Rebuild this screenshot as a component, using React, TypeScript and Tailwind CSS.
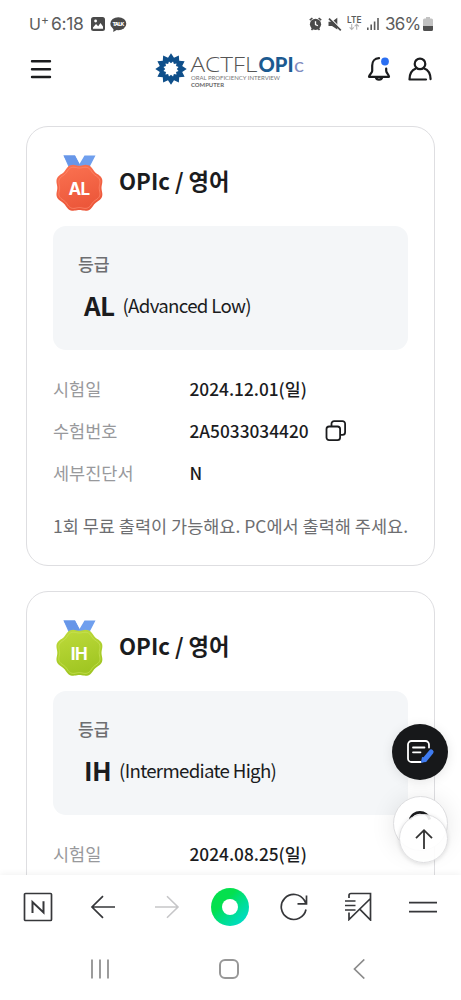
import React from 'react';

type Medal = {
  code: string;
  from: string;
  to: string;
  line: string;
};

type Result = {
  title: string;
  level: string;
  date: string;
  number: string;
  medal: Medal;
};

const results: Result[] = [
  {
    title: 'OPIc / 영어',
    level: '(Advanced Low)',
    date: '2024.12.01(일)',
    number: '2A5033034420',
    medal: { code: 'AL', from: '#fb7352', to: '#ec573a', line: '#ff8e72' },
  },
  {
    title: 'OPIc / 영어',
    level: '(Intermediate High)',
    date: '2024.08.25(일)',
    number: '2A5033034420',
    medal: { code: 'IH', from: '#bfdb3c', to: '#a0c622', line: '#cae25a' },
  },
];

// closed outline whose radius swings around `radius` eight times
function scallop(cx: number, cy: number, radius: number, depth: number) {
  const points: string[] = [];
  for (let i = 0; i < 120; i++) {
    const a = (i / 120) * Math.PI * 2;
    const r = radius - depth * Math.cos(8 * a);
    points.push(`${(cx + r * Math.cos(a)).toFixed(2)},${(cy + r * Math.sin(a)).toFixed(2)}`);
  }
  return points.join(' ');
}

function star(cx: number, cy: number, outer: number, inner: number, count: number, shift = 0) {
  const points: string[] = [];
  for (let i = 0; i < count * 2; i++) {
    const a = ((i + shift) / (count * 2)) * Math.PI * 2 - Math.PI / 2;
    const r = i % 2 === 0 ? outer : inner;
    points.push(`${(cx + r * Math.cos(a)).toFixed(2)},${(cy + r * Math.sin(a)).toFixed(2)}`);
  }
  return points.join(' ');
}

function StatusBar() {
  return (
    <div className="h-12 shrink-0 flex items-center justify-between pl-[29px] pr-[28px] text-[#5c5c5c] font-['Inter',sans-serif]">
      <div className="flex items-center">
        <span className="text-[16px] leading-5">U</span>
        <span className="text-[12px] leading-5 -mt-[9px] w-[10px]">+</span>
        <span className="text-[17.5px] leading-5 w-[40px] tracking-[-0.3px]">6:18</span>
        <svg className="mr-[5px]" width="14" height="14" viewBox="0 0 14 14">
          <rect width="14" height="14" rx="2.5" fill="#4a4a4a" />
          <path d="M2 10.5 5 7l2.2 2.3L9.5 6 12 9.5v2.3H2z" fill="#fff" />
          <circle cx="4.6" cy="4" r="1.4" fill="#fff" />
        </svg>
        <svg width="17" height="15" viewBox="0 0 17 15">
          <ellipse cx="8.3" cy="6.7" rx="8" ry="6.5" fill="#4a4a4a" />
          <path d="M3.6 10.5 3.2 15l4.3-2.5z" fill="#4a4a4a" />
          <text x="2.4" y="8.7" fontSize="5.2" fontWeight="800" fill="#fff" textLength="12">TALK</text>
        </svg>
      </div>
      <div className="flex items-center">
        <svg className="mr-[6px]" width="13" height="14" viewBox="0 0 13 14">
          <circle cx="6.5" cy="7.3" r="5.6" fill="#4a4a4a" />
          <path d="M.8 3.2 3.4 1M12.2 3.2 9.6 1M2.5 13l1.4-1.6M10.5 13l-1.4-1.6" stroke="#4a4a4a" strokeWidth="1.6" />
          <path d="M6.5 4.2v3.3l2.4 1.3" stroke="#fff" strokeWidth="1.3" fill="none" />
        </svg>
        <svg className="mr-[5px]" width="14" height="14" viewBox="0 0 14 14">
          <path d="M.5 4.8H4L9.3.8v11.8L4 9H.5z" fill="#4a4a4a" />
          <path d="M1.8.6 13.6 12.4" stroke="#fff" strokeWidth="1.2" />
          <path d="M1 1.6 12.8 13.4" stroke="#4a4a4a" strokeWidth="1.7" />
        </svg>
        <svg className="mr-[5px] -mt-[2px]" width="15" height="16" viewBox="0 0 15 16">
          <text x="0" y="7.5" fontSize="8.6" fontWeight="600" fill="#5c5c5c" textLength="14.5" lengthAdjust="spacingAndGlyphs">LTE</text>
          <path d="M4.7 9v5.5M2.6 12.4l2.1 2.1 2.1-2.1M9.7 14.8V9.3M7.6 11.4l2.1-2.1 2.1 2.1" stroke="#b5b5b5" strokeWidth="1.1" fill="none" />
        </svg>
        <svg className="mr-[7px]" width="12" height="12" viewBox="0 0 12 12" fill="#5c5c5c">
          <rect y="9.5" width="1.6" height="2.5" />
          <rect x="3.4" y="6.5" width="1.6" height="5.5" />
          <rect x="6.8" y="3.5" width="1.6" height="8.5" />
          <rect x="10.2" width="1.6" height="12" />
        </svg>
        <span className="text-[17px] leading-5 w-[36px] -ml-px mr-px tracking-[-0.8px] whitespace-nowrap">36%</span>
        <svg className="ml-[1px]" width="10" height="14" viewBox="0 0 10 14">
          <path d="M3 0h4v1.5h1.5A1.5 1.5 0 0 1 10 3v6H0V3a1.5 1.5 0 0 1 1.5-1.5H3z" fill="#c2c2c2" />
          <path d="M0 9h10v3.5A1.5 1.5 0 0 1 8.5 14h-7A1.5 1.5 0 0 1 0 12.5z" fill="#505050" />
        </svg>
      </div>
    </div>
  );
}

function Logo() {
  return (
    <svg width="150" height="38" viewBox="0 -1 150 38" fontFamily="Lato, sans-serif">
      <polygon points={star(16, 18, 15.7, 11.6, 12)} fill="#0f4f8a" />
      <polygon points={star(16, 18, 7.8, 5.8, 12, 1)} fill="#fff" />
      <text x="35.5" y="21" fontSize="20" fontWeight="300" fill="#555" textLength="67" lengthAdjust="spacingAndGlyphs" fontFamily="Open Sans, sans-serif">ACTFL</text>
      <text x="103.5" y="21" fontSize="20" fontWeight="900" fill="#1c5a90" textLength="35" lengthAdjust="spacingAndGlyphs">OPI</text>
      <text x="139" y="21" fontSize="20" fill="#7f8cc0" textLength="10" lengthAdjust="spacingAndGlyphs">c</text>
      <text x="36" y="28.8" fontSize="5.4" fill="#777" textLength="89" lengthAdjust="spacingAndGlyphs">ORAL PROFICIENCY INTERVIEW</text>
      <text x="36" y="35.6" fontSize="5.4" fontWeight="700" fill="#666" textLength="33" lengthAdjust="spacingAndGlyphs">COMPUTER</text>
    </svg>
  );
}

function Header() {
  return (
    <header className="h-[42px] shrink-0 flex items-center pl-[30px] pr-[29px]">
      <svg width="22" height="20" viewBox="0 0 22 20" stroke="#1b1c1e" strokeWidth="2.4" strokeLinecap="round">
        <path d="M2 2.3h18M2 10.2h18M2 18h18" />
      </svg>
      <div className="ml-[103px] -mt-px">
        <Logo />
      </div>
      <div className="ml-auto flex items-center gap-[17px]">
        <svg width="24" height="26" viewBox="0 0 24 26" fill="none" stroke="#1b1c1e" strokeWidth="2.2" strokeLinecap="round" strokeLinejoin="round">
          <path d="M12 2.2C7.5 2.2 5.2 5.6 5.2 9.5v5.5c0 2-3.2 3.500-3.2 5.800h20c0-2.200-2.600-3.600-2.800-6V12.500" />
          <path d="M8.700 21c.4 2 1.600 2.700 3.300 2.700s2.900-.7 3.300-2.700" />
          <circle cx="18" cy="5.500" r="3.900" fill="#2b6ff2" stroke="none" />
        </svg>
        <svg width="24" height="26" viewBox="0 0 24 26" fill="none" stroke="#1b1c1e" strokeWidth="2.200" strokeLinecap="round" strokeLinejoin="round">
          <circle cx="12" cy="7.900" r="5.300" />
          <path d="M7.800 12.500C3.200 14.300 1.500 18.500 1.500 23.500h16.500M16.200 12.500c4.300 1.500 6.200 5.400 6.400 10.600" />
        </svg>
      </div>
    </header>
  );
}

function MedalBadge({ medal }: { medal: Medal }) {
  const id = `medal-${medal.code}`;
  return (
    <svg width="52" height="56" viewBox="0 0 52 56">
      <defs>
        <linearGradient id={id} x1="0" y1="0" x2="0.3" y2="1">
          <stop offset="0" stopColor={medal.from} />
          <stop offset="1" stopColor={medal.to} />
        </linearGradient>
      </defs>
      <path d="M10.5.5H22l4.500 8.500L31.500.5h11L36 13H16z" fill="#6f9fee" />
      <path d="m22 .5 4.500 8.500-3 4h-6L10.500.5z" fill="#6796e8" />
      <polygon points={scallop(26.4, 32.8, 23.2, 1.1)} fill={`url(#${id})`} />
      <polygon points={scallop(26.4, 32.8, 20.8, 1)} fill="none" stroke={medal.line} strokeWidth="0.7" />
      <text x="26" y="39.5" textAnchor="middle" fontSize="17" fontWeight="700" fill="#fff" letterSpacing="-0.6" fontFamily="Inter, sans-serif">
        {medal.code}
      </text>
    </svg>
  );
}

function CopyIcon() {
  return (
    <svg className="ml-4" width="22" height="22" viewBox="0 0 22 22" fill="none" stroke="#1b1c1e" strokeWidth="1.8" strokeLinejoin="round">
      <rect x="1.5" y="6.5" width="13.6" height="13.6" rx="2.6" />
      <path d="M6.5 6.2V3.8a2.6 2.6 0 0 1 2.6-2.6h8.4a2.6 2.6 0 0 1 2.6 2.6v8.4a2.6 2.6 0 0 1-2.6 2.6h-2.2" />
    </svg>
  );
}

function Row({ label, children }: { label: string; children: React.ReactNode }) {
  return (
    <div className="flex items-center h-[42px] text-[17.5px]">
      <dt className="w-[136.5px] text-[#98999c]">{label}</dt>
      <dd className="flex items-center font-medium text-[#1b1c1e] text-[17.3px]">{children}</dd>
    </div>
  );
}

function ResultCard({ result }: { result: Result }) {
  return (
    <section className="h-[440px] shrink-0 rounded-[22px] border border-[#dedee1] px-[26px] pt-7 whitespace-nowrap">
      <div className="flex items-center h-14">
        <MedalBadge medal={result.medal} />
        <h2 className="ml-[14px] -mt-[7px] text-[22.2px] leading-8 font-bold text-[#1b1c1e]">{result.title}</h2>
      </div>
      <div className="mt-[15px] h-[124px] rounded-[13px] bg-[#f4f6f8] pl-[25px] pt-[25px]">
        <p className="text-[17.2px] leading-[26px] font-medium text-[#6d6e71]">등급</p>
        <p className="mt-[10px] ml-[6px] flex items-center leading-9 text-[#1b1c1e]">
          <strong className="text-[26px] font-bold tracking-[-0.6px]">{result.medal.code}</strong>
          <span className="ml-2 text-[18.7px] tracking-[-0.7px]">{result.level}</span>
        </p>
      </div>
      <dl className="mt-[18px]">
        <Row label="시험일">{result.date}</Row>
        <Row label="수험번호">
          {result.number}
          <CopyIcon />
        </Row>
        <Row label="세부진단서">N</Row>
      </dl>
      <p className="mt-[19px] text-[17.5px] leading-[26px] text-[#6d6e71]">1회 무료 출력이 가능해요. PC에서 출력해 주세요.</p>
    </section>
  );
}

function FloatingButtons() {
  return (
    <>
      <button className="absolute left-[392px] top-[634px] size-14 rounded-full bg-[#17181a] flex items-center justify-center shadow-[0_2px_12px_rgba(0,0,0,0.1)]">
        <svg width="30" height="26" viewBox="0 0 30 26" fill="none" stroke="#fff" strokeWidth="1.8" strokeLinecap="round" strokeLinejoin="round">
          <path d="M24 8.5V5.5a3.5 3.5 0 0 0-3.5-3.5h-14A3.5 3.5 0 0 0 3 5.5v14A3.5 3.5 0 0 0 6.5 23h9.300M8 8.500h11.500M8 13.300h7.500" />
          <path d="m19.800 20.600 6.300-7.600" stroke="#3f7bf0" strokeWidth="5" />
          <path d="m17 22.800.8-4 3 2.800z" fill="#3f7bf0" stroke="#3f7bf0" />
        </svg>
      </button>
      <button className="absolute left-[393px] top-[706px] size-[55px] rounded-full bg-white border border-[#dedee0] shadow-[0_2px_24px_rgba(0,0,0,0.1)] flex justify-center pt-[13px]">
        <svg width="24" height="24" viewBox="0 0 24 24" fill="none" stroke="#1b1c1e" strokeWidth="2.8">
          <path d="M1 9.500a10.400 10.400 0 0 1 19.800 0" />
        </svg>
      </button>
      <button className="absolute left-[399px] top-[724px] size-[49px] rounded-full bg-white/90 border border-[#dedee0] shadow-[0_1px_4px_rgba(0,0,0,0.12)] flex items-center justify-center">
        <svg width="20" height="22" viewBox="0 0 20 22" fill="none" stroke="#333" strokeWidth="1.8">
          <path d="M10 21V2M2 10.200l8-8 8 8" />
        </svg>
      </button>
    </>
  );
}

function Toolbar() {
  return (
    <nav className="relative h-[63px] shrink-0 bg-white grid grid-cols-7 place-items-center pl-[6px] pr-[7px] shadow-[0_-1px_7px_rgba(0,0,0,0.06)]">
      <svg width="30" height="30" viewBox="0 0 30 30" fill="none" stroke="#36373a" strokeWidth="1.7">
        <rect x="1.5" y="1.5" width="27" height="27" rx="1" />
        <path d="M9.5 21V10l11 10.5V9.3" strokeWidth="2" />
      </svg>
      <svg className="ml-[2px]" width="26" height="24" viewBox="0 0 26 24" fill="none" stroke="#36373a" strokeWidth="1.7">
        <path d="M25 12H2M13 1.2 2 12l11 10.8" />
      </svg>
      <svg className="ml-px" width="26" height="24" viewBox="0 0 26 24" fill="none" stroke="#c6c6c8" strokeWidth="1.6">
        <path d="M1 12h23M13 1.2 24 12 13 22.8" />
      </svg>
      <div className="size-[38px] rounded-full bg-linear-to-br from-[#04e04e] from-35% to-[#0cd9dc] flex items-center justify-center">
        <div className="size-4 rounded-full bg-white" />
      </div>
      <svg width="28" height="28" viewBox="0 0 28 28" fill="none" stroke="#36373a" strokeWidth="1.7">
        <path d="M26 16.5A12.5 12.5 0 1 1 24.5 7.5L26 10.5M26.5 2.5v8.4h-9" />
      </svg>
      <svg width="28" height="29" viewBox="0 0 28 29" fill="none" stroke="#36373a" strokeWidth="1.7">
        <path d="M5 6V3.5a2 2 0 0 1 2-2h19.5V28L15.5 16.8M5 20.5v7L26.5 6.5M1 9h10.5M1 13.5h10.5M1 18h10.5" />
      </svg>
      <svg className="ml-px" width="28" height="12" viewBox="0 0 28 12" stroke="#36373a" strokeWidth="1.7">
        <path d="M0 1.7h28M0 10.7h28" />
      </svg>
    </nav>
  );
}

function SystemNav() {
  return (
    <nav className="relative h-[62px] shrink-0 bg-white grid grid-cols-3 place-items-center pl-[34px] pr-[36px] pb-px">
      <svg className="ml-px" width="20" height="20" viewBox="0 0 20 20" stroke="#8b8b8b" strokeWidth="1.7">
        <path d="M2 .5v19M10 .5v19M18 .5v19" />
      </svg>
      <div className="size-5 rounded-[6px] border-2 border-[#979797]" />
      <svg className="-ml-[2px]" width="12" height="20" viewBox="0 0 12 20" fill="none" stroke="#8b8b8b" strokeWidth="1.7">
        <path d="M11.3.5 1.5 10l9.8 9.5" />
      </svg>
    </nav>
  );
}

export default function App() {
  return (
    <div className="w-[461px] h-[1000px] bg-white overflow-hidden flex flex-col font-['Noto_Sans_CJK_KR',sans-serif]">
      <StatusBar />
      <Header />
      <main className="relative flex-1 min-h-0 overflow-hidden flex flex-col gap-[25px] px-[26px] pt-9">
        {results.map((result) => (
          <ResultCard key={result.medal.code} result={result} />
        ))}
        <FloatingButtons />
      </main>
      <Toolbar />
      <SystemNav />
    </div>
  );
}
